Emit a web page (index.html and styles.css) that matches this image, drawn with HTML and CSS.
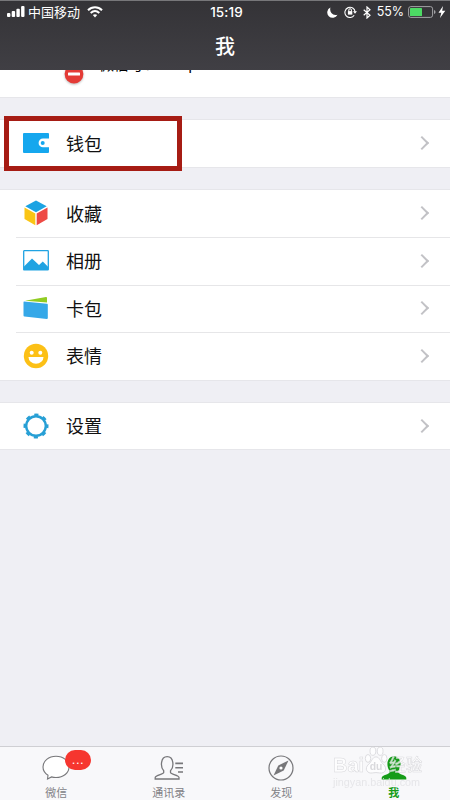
FILE: index.html
```html
<!DOCTYPE html>
<html lang="zh-CN">
<head>
<meta charset="utf-8">
<title>我</title>
<link rel="stylesheet" href="styles.css">
</head>
<body>
<div class="screen">
  <header class="header">
    <div class="status">
      <div class="status-left">
        <svg width="18" height="12" viewBox="0 0 18 12" fill="#fff"><rect x="0" y="7" width="3.4" height="4" rx="1"/><rect x="4.7" y="5" width="3.4" height="6" rx="1"/><rect x="9.4" y="2.8" width="3.4" height="8.2" rx="1"/><rect x="14.1" y="0" width="3.4" height="11" rx="1"/></svg>
        <span class="carrier">中国移动</span>
        <svg class="wifi" width="16" height="12" viewBox="0 0 16 12" fill="none" stroke="#fff" stroke-width="2"><path d="M1 4.2C5 .2 11 .2 15 4.2"/><path d="M3.7 7C6.3 4.5 9.7 4.5 12.3 7"/><path d="M8 11.4L5.8 9.1Q8 7.4 10.2 9.1Z" fill="#fff" stroke="none"/></svg>
      </div>
      <span class="time">15:19</span>
      <div class="status-right">
        <svg width="11" height="11" viewBox="0 0 11 11"><path d="M3.4.5A5.4 5.4 0 1 0 10.5 7.8Q6.5 8.8 4.4 6 2.6 3.4 3.4.5Z" fill="#fff"/></svg>
        <svg class="lock" width="13" height="12" viewBox="0 0 13 12" fill="none" stroke="#fff"><path d="M10.2 9.3A5.1 5.1 0 1 1 11.1 6" stroke-width="1.1"/><path d="M9 5.3h4l-2 2.5z" fill="#fff" stroke="none"/><rect x="3.9" y="5.1" width="4.4" height="3.5" fill="#fff" stroke="none"/><path d="M4.8 5.5V4a1.3 1.3 0 0 1 2.6 0v1.5"/></svg>
        <svg class="bt" width="8" height="13" viewBox="0 0 8 13" fill="none" stroke="#fff" stroke-width="1.2"><path d="M.7 3.7L7 9.2 4 12V1l3 2.8L.7 9.3"/></svg>
        <span class="percent">55%</span>
        <svg class="battery" width="28" height="12" viewBox="0 0 28 12"><rect x=".6" y=".6" width="24" height="10.8" rx="2.2" fill="none" stroke="#a3a3a6" stroke-width="1"/><rect x="2" y="2" width="12" height="8" rx=".6" fill="#4cd964"/><path d="M26 4q1.6.5 1.6 2T26 8z" fill="#a3a3a6"/></svg>
        <svg class="bolt" width="8" height="12" viewBox="0 0 8 12"><path d="M5 0L.5 6.7h2.8L2 12 7.3 4.8H4.2z" fill="#fff"/></svg>
      </div>
    </div>
    <h1 class="title">我</h1>
  </header>

  <section class="profile">
    <svg class="stop" width="20" height="20" viewBox="0 0 20 20"><circle cx="10" cy="10" r="9.4" fill="#e43b36"/><rect x="4" y="8.5" width="12" height="3" rx=".6" fill="#fff"/></svg>
    <span class="wxid">微信号：</span><span class="wxname">xpoonon</span>
  </section>

  <main>
    <section class="group">
      <div class="row single boxed">
        <span class="icon"><svg width="26" height="20" viewBox="0 0 26 20"><path d="M1 0H25Q26 0 26 1V5.5H20a4.4 4.4 0 0 0 0 8.8h6V19q0 1-1 1H1Q0 20 0 19V1Q0 0 1 0Z" fill="#15a7ee"/><circle cx="19.7" cy="9.9" r="2" fill="#15a7ee"/></svg></span>
        <span class="label">钱包</span><i class="chevron"></i>
      </div>
    </section>
    <section class="group">
      <div class="row">
        <span class="icon"><svg width="24" height="26" viewBox="0 0 24 26"><path d="M12 .5L22.7 6.3 12 12.3 1.3 6.3z" fill="#1ba3e3"/><path d="M.5 7.5L11.3 13.5V25.3L.5 19z" fill="#fac515"/><path d="M23.5 7.5L12.7 13.5V25.3L23.5 19z" fill="#ee4a45"/></svg></span>
        <span class="label">收藏</span><i class="chevron"></i>
      </div>
      <div class="row">
        <span class="icon"><svg width="26" height="21" viewBox="0 0 26 21"><rect x=".7" y=".7" width="24.6" height="19.2" rx=".5" fill="#fff" stroke="#20a3e2" stroke-width="1.3"/><path d="M1 16.5L9 8.5 16 15 19.8 11.5 25 16.8V20H1z" fill="#20a3e2"/></svg></span>
        <span class="label">相册</span><i class="chevron"></i>
      </div>
      <div class="row">
        <span class="icon"><svg width="25" height="24" viewBox="0 0 25 24"><path d="M2 4.8L23 1q1-.1 1 .8V6.6z" fill="#91cc22"/><path d="M1 5.6L24 7.8q.8.1.8 1V22q0 1-1 1L1.5 20.5Q.5 20.4.5 19.4V6.5Q.5 5.5 1 5.6Z" fill="#35a8e8"/></svg></span>
        <span class="label">卡包</span><i class="chevron"></i>
      </div>
      <div class="row">
        <span class="icon"><svg width="26" height="26" viewBox="0 0 26 26"><circle cx="13" cy="13" r="12.2" fill="#fcc016"/><circle cx="8.7" cy="9.8" r="2" fill="#fff"/><circle cx="17.3" cy="9.8" r="2" fill="#fff"/><path d="M5.5 14h15a7.5 6.8 0 0 1-15 0z" fill="#fff"/></svg></span>
        <span class="label">表情</span><i class="chevron"></i>
      </div>
    </section>
    <section class="group">
      <div class="row single">
        <span class="icon"><svg width="26" height="26" viewBox="0 0 26 26" fill="none" stroke="#279fd5"><circle cx="13" cy="13" r="9.8" stroke-width="2.4"/><circle cx="13" cy="13" r="11.4" stroke-width="2.2" stroke-dasharray="4.2 4.753" stroke-dashoffset="2.1"/></svg></span>
        <span class="label">设置</span><i class="chevron"></i>
      </div>
    </section>
  </main>

  <nav class="tabs">
    <div class="tab">
      <svg width="28" height="26" viewBox="0 0 28 26" fill="#fff" stroke="#77777a" stroke-width="1.1"><path d="M5.5 24L6 20.3C2.8 18.2 1 15.3 1 12 1 6 6.6 1.3 14 1.3S27 6 27 12 21.4 22.5 14 22.5q-2.4 0-4.5-.6z"/></svg>
      <span>微信</span><b class="badge">...</b>
    </div>
    <div class="tab">
      <svg width="30" height="26" viewBox="0 0 30 26" fill="none" stroke="#77777a" stroke-width="1.3"><path d="M1.2 24V22.5C1.5 20 9.7 19.3 9.7 17.6V15.7C6.3 12.3 6.3 1.6 13.2 1.6S20.1 12.3 16.5 15.7V17.6C16.5 19.3 25 20 25 22.5V24Z"/><path d="M21.3 8.4H29M21.3 12.7H29M24 17H29" stroke-width="1.6"/></svg>
      <span>通讯录</span>
    </div>
    <div class="tab">
      <svg width="26" height="26" viewBox="0 0 26 26"><circle cx="13" cy="13" r="12" fill="none" stroke="#77777a" stroke-width="1.2"/><path d="M20.5 5.5L15.7 15.6 5.5 20.5 10.3 10.4z" fill="#77777a"/><circle cx="13" cy="13" r="1.6" fill="#fff"/></svg>
      <span>发现</span>
    </div>
    <div class="tab active">
      <svg width="26" height="26" viewBox="0 0 26 26"><path d="M.7 24.5V22.8C1 20 8.6 19.3 8.6 17.3V15.5C5 12 5.4 1.2 13 1.2S21 12 17.4 15.5V17.3C17.4 19.3 25 20 25.3 22.8V24.5Z" fill="#159c18"/></svg>
      <span>我</span>
    </div>
    <div class="watermark">
      <div class="brand"><span>Bai</span><svg width="24" height="28" viewBox="0 0 22 27"><g fill="#fff" stroke="#d3d3d7" stroke-width=".9"><ellipse cx="3.3" cy="12" rx="2.6" ry="3.8"/><ellipse cx="8" cy="5" rx="2.8" ry="4"/><ellipse cx="15" cy="5" rx="2.8" ry="4"/><ellipse cx="19" cy="12" rx="2.6" ry="3.8"/><path d="M11 10.5C7.5 10.5 7 15 4 17.5-1 22 3 27 7.5 26q3.5-.8 7 0C20 27 22.5 21.5 18 17.5 15 15 14.5 10.5 11 10.5Z"/></g><text x="11" y="23.5" text-anchor="middle" class="du">du</text></svg><span class="cn">经验</span></div>
      <div class="url">jingyan.baidu.com</div>
    </div>
  </nav>
</div>
</body>
</html>
```
FILE: styles.css
```css
*, *::before, *::after { box-sizing: border-box; }
body { margin: 0; font-family: "Liberation Sans", "Noto Sans CJK SC", sans-serif; }
svg { display: block; flex: none; }
.screen { width: 450px; height: 800px; display: flex; flex-direction: column; background: #efeff4; overflow: hidden; }
.header { height: 70px; flex: none; background: linear-gradient(#343337, #403f44); border-top: 1px solid #77777a; color: #fff; }
.status { height: 22px; display: grid; grid-template-columns: 1fr auto 1fr; align-items: center; padding: 0 4px 0 7px; }
.status-left, .status-right { display: flex; align-items: center; }
.status-right { justify-content: flex-end; }
.carrier { margin: 1px 0 0 3px; font-size: 13px; line-height: 20px; }
.wifi { margin-left: 7px; }
.time { font: 500 13.5px/20px Inter, sans-serif; letter-spacing: .1px; }
.lock { margin-left: 6px; }
.bt { margin-left: 6px; }
.percent { margin-left: 6px; font: 12.5px/20px Inter, sans-serif; letter-spacing: -.1px; }
.battery { margin-left: 4px; }
.bolt { margin-left: 2px; }
.title { margin: 9px 0 0; text-align: center; font-size: 20px; font-weight: 500; line-height: 30px; }
.profile { height: 28px; flex: none; display: flex; align-items: flex-start; padding-left: 64px; background: #fff; border-bottom: 1px solid #e6e6ea; overflow: hidden; }
.stop { margin-top: -6px; filter: drop-shadow(0 1px 1px #bbb); }
.wxid { width: 82px; margin: -14px 0 0 15px; font-size: 15px; line-height: 18px; }
.wxname { margin-top: -14px; font-size: 15px; line-height: 18px; }
.group { margin-top: 21px; background: #fff; border-top: 1px solid #e6e6ea; border-bottom: 1px solid #e6e6ea; }
.row { position: relative; height: 47.5px; display: flex; align-items: center; padding-right: 23px; }
.row.single { height: 46.5px; }
.row + .row::before { content: ""; position: absolute; top: 0; left: 16px; right: 0; height: 1px; background: #e6e6e8; }
.icon { width: 39px; margin-left: 16px; display: flex; justify-content: center; }
.label { flex: 1; margin: 3px 0 0 11px; font-size: 18px; line-height: 26px; color: #111; }
.chevron { width: 10px; height: 10px; border: solid #c2c2c6; border-width: 2px 2px 0 0; transform: rotate(45deg); }
.boxed::after { content: ""; position: absolute; left: 4px; top: -4px; width: 178px; height: 55px; border: 5px solid #a61c14; }
.tabs { position: relative; height: 54px; flex: none; margin-top: auto; display: grid; grid-template-columns: repeat(4, 1fr); background: #f8f8fa; border-top: 1px solid #cfcfd3; }
.tab { position: relative; display: flex; flex-direction: column; align-items: center; padding-top: 8px; color: #828286; font-size: 11px; line-height: 14px; }
.tab > span { margin-top: 5px; }
.active { color: #159c18; font-weight: 700; }
.badge { position: absolute; left: 65px; top: 3px; width: 26px; height: 20px; border-radius: 10px; background: #f6362f; color: #fff; font-size: 13px; font-weight: 400; line-height: 19px; text-align: center; letter-spacing: .6px; }
.watermark { position: absolute; left: 333px; top: -1px; opacity: .8; color: #fff; }
.brand { display: flex; align-items: flex-end; height: 28px; font-size: 20px; font-weight: 700; line-height: 22px; -webkit-text-stroke: .5px #d0d0d4; }
.brand > span { margin-bottom: -2px; }
.brand .cn { font-size: 16.5px; font-weight: 500; margin-left: 1px; }
.du { font-size: 10px; font-weight: 700; fill: #d2d2d6; stroke: none; -webkit-text-stroke: 0; }
.url { margin-top: 2px; font-size: 10.8px; line-height: 12px; color: #e2e2e5; }
```
